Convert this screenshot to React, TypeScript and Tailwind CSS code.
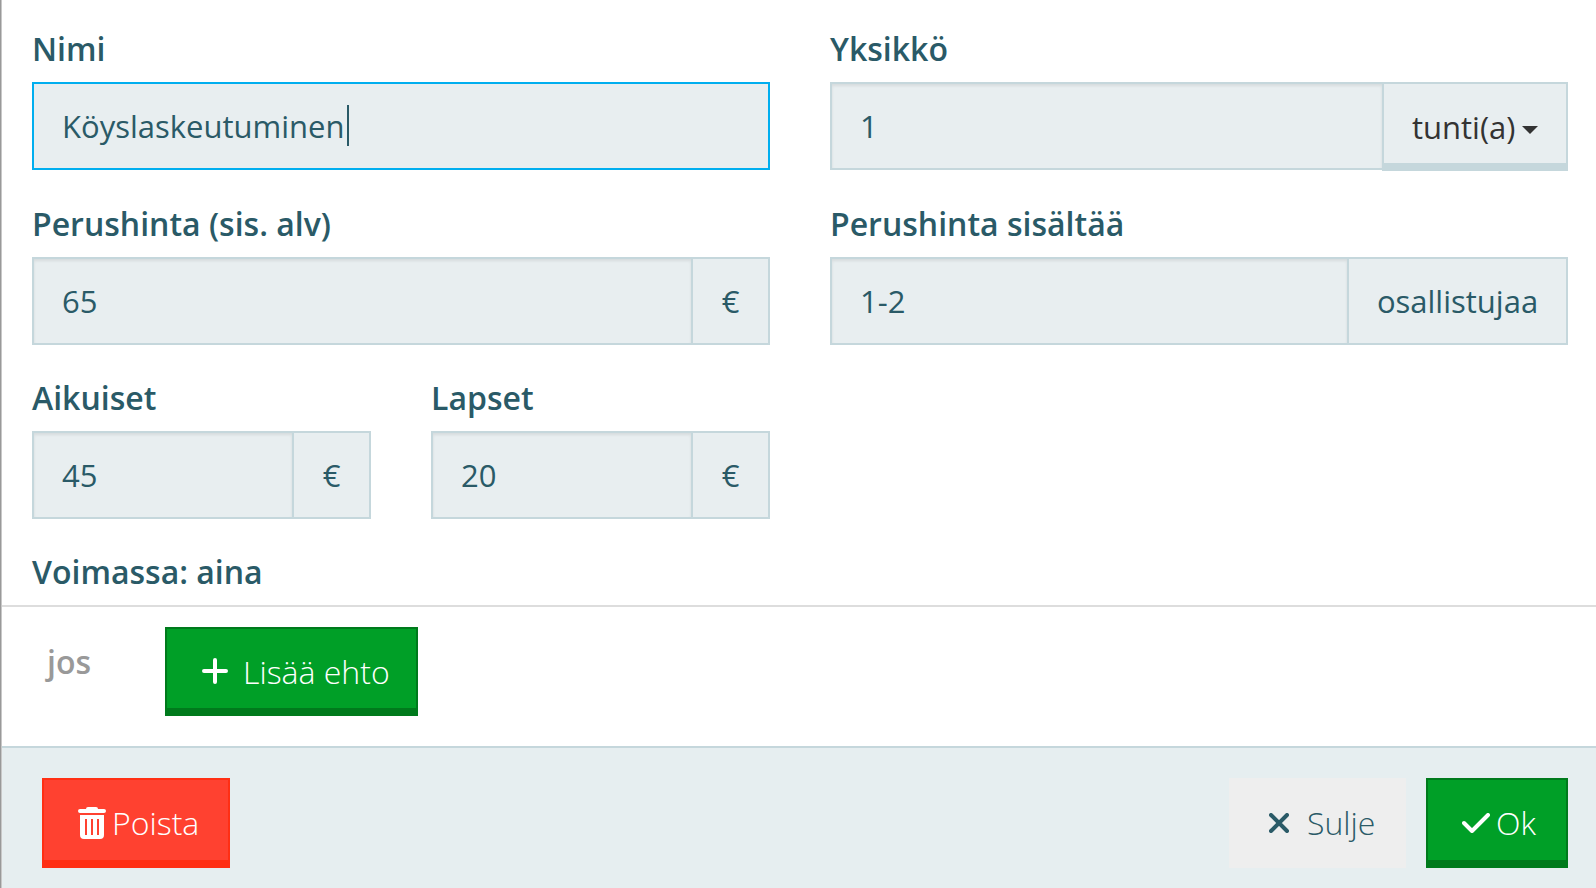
import React, { useState } from 'react';
import { clsx } from 'clsx';

interface FieldProps {
  id: string;
  label: string;
  defaultValue: string;
  addon?: string;
  addonClass?: string;
}

const INPUT = 'h-[88px] w-full min-w-0 flex-1 border-2 border-[#c5d7dc] bg-[#e8eef0] px-7 text-[31px] text-[#2a5a67] outline-none shadow-[inset_0_2px_3px_rgba(0,0,0,0.08)]';
const LABEL = 'mb-[11px] block leading-[45px] font-semibold text-[#2a5a67]';
const BUTTON = 'flex items-center border-2 border-b-8 pt-[5px] font-light whitespace-nowrap';

const PlusIcon = () => (
  <svg width="26" height="26" viewBox="0 0 26 26" fill="none" stroke="currentColor" strokeWidth="4" strokeLinecap="round" aria-hidden="true">
    <path d="M13 2v22M2 13h22" />
  </svg>
);

const TrashIcon = () => (
  <svg width="28" height="32" viewBox="0 0 28 32" fill="currentColor" aria-hidden="true">
    <path d="M10 0h8a2 2 0 0 1 2 2h6a2 2 0 0 1 0 4H2a2 2 0 0 1 0-4h6a2 2 0 0 1 2-2z" />
    <path fillRule="evenodd" d="M2 8h24v20a4 4 0 0 1-4 4H6a4 4 0 0 1-4-4zM7 12v16h2V12zM13 12v16h2V12zM19 12v16h2V12z" />
  </svg>
);

const CloseIcon = () => (
  <svg width="20" height="20" viewBox="0 0 20 20" fill="none" stroke="currentColor" strokeWidth="4" strokeLinecap="round" aria-hidden="true">
    <path d="M2 2l16 16M18 2L2 18" />
  </svg>
);

const CheckIcon = () => (
  <svg width="28" height="20" viewBox="0 0 28 20" fill="none" stroke="currentColor" strokeWidth="4" strokeLinecap="round" strokeLinejoin="round" aria-hidden="true">
    <path d="M2 10l8 8L26 2" />
  </svg>
);

const Field: React.FC<FieldProps> = ({ id, label, defaultValue, addon, addonClass }) => (
  <div className="min-w-0 flex-1">
    <label htmlFor={id} className={LABEL}>{label}</label>
    <div className="flex">
      <input id={id} type="text" defaultValue={defaultValue} className={clsx(INPUT, addon && 'border-r-0')} />
      {addon && (
        <span className={clsx('flex h-[88px] shrink-0 items-center justify-center border-2 border-[#c5d7dc] bg-[#e8eef0] text-[31px] text-[#2a5a67]', addonClass)}>
          {addon}
        </span>
      )}
    </div>
  </div>
);

const App: React.FC = () => {
  const [name, setName] = useState('Köyslaskeutuminen ');
  const [unit, setUnit] = useState('tunti');

  return (
    <form
      onSubmit={(e) => e.preventDefault()}
      className="flex min-h-screen flex-col border-l border-[#999] bg-white pl-px font-['Open_Sans','Noto_Sans',sans-serif] text-[32px] leading-[45px] shadow-[inset_1px_0_0_#c8c8c8]"
    >
      <div className="flex flex-col gap-[30px] pt-[26px] pr-7 pl-[30px]">
        <div className="flex gap-[60px]">
          <div className="min-w-0 flex-1">
            <label htmlFor="name" className={LABEL}>Nimi</label>
            <div className="relative flex">
              <input
                id="name"
                type="text"
                value={name}
                onChange={(e) => setName(e.target.value)}
                className="h-[88px] w-full border-2 border-[#00aeef] bg-[#e8eef0] px-7 text-[31px] text-[#2a5a67] caret-transparent outline-none"
              />
              <span className="pointer-events-none absolute top-[23px] left-[315px] h-[41px] w-[2px] bg-[#2a5a67]" />
            </div>
          </div>
          <div className="min-w-0 flex-1">
            <label htmlFor="amount" className={LABEL}>Yksikkö</label>
            <div className="flex items-start">
              <input id="amount" type="text" defaultValue="1" className={clsx(INPUT, 'border-r-0')} />
              <div className="relative shrink-0">
                <select
                  aria-label="Yksikön tyyppi"
                  value={unit}
                  onChange={(e) => setUnit(e.target.value)}
                  className="block h-[89px] w-[186px] appearance-none border-2 border-b-8 border-[#c5d7dc] bg-[#e8eef0] pt-2 pl-7 text-[31px] text-[#333] outline-none"
                >
                  <option value="tunti">tunti(a)</option>
                </select>
                <svg className="pointer-events-none absolute top-[44px] right-[30px]" width="16" height="8" viewBox="0 0 16 8" fill="#333" aria-hidden="true">
                  <path d="M0 0h16L8 8z" />
                </svg>
              </div>
            </div>
          </div>
        </div>

        <div className="flex gap-[60px]">
          <Field id="price" label="Perushinta (sis. alv)" defaultValue="65" addon="€" addonClass="w-[79px]" />
          <Field id="included" label="Perushinta sisältää" defaultValue="1-2" addon="osallistujaa" addonClass="w-[221px]" />
        </div>

        <div className="flex gap-[60px]">
          <div className="flex min-w-0 flex-1 gap-[60px]">
            <Field id="adults" label="Aikuiset" defaultValue="45" addon="€" addonClass="w-[79px]" />
            <Field id="children" label="Lapset" defaultValue="20" addon="€" addonClass="w-[79px]" />
          </div>
          <div className="flex-1" />
        </div>

        <h2 className={LABEL}>Voimassa: aina</h2>
      </div>

      <div className="flex items-start border-t-2 border-[#ddd] pt-5 pb-[30px] pl-[45px]">
        <span className="w-[118px] pt-3 font-semibold text-[#999]">jos</span>
        <button type="button" className={clsx(BUTTON, 'h-[89px] w-[253px] gap-[15px] border-[#007a1c] bg-[#009f27] pl-[35px] text-white')}>
          <PlusIcon />
          Lisää ehto
        </button>
      </div>

      <div className="flex flex-1 items-start justify-between border-t-2 border-[#c5d7dc] bg-[#e6eef0] pt-[30px] pr-7 pb-5 pl-10">
        <button type="button" className={clsx(BUTTON, 'h-[90px] w-[188px] gap-[6px] border-[#ff2f14] bg-[#ff4130] pl-[34px] text-white')}>
          <TrashIcon />
          Poista
        </button>
        <div className="flex gap-5">
          <button type="button" className={clsx(BUTTON, 'h-[90px] w-[177px] gap-[18px] border-transparent bg-[#eee] pl-[38px] text-[#2a5a67]')}>
            <CloseIcon />
            Sulje
          </button>
          <button type="submit" className={clsx(BUTTON, 'h-[90px] w-[142px] gap-[6px] border-[#007a1c] bg-[#009f27] pl-[34px] text-white')}>
            <CheckIcon />
            Ok
          </button>
        </div>
      </div>
    </form>
  );
};

export default App;
